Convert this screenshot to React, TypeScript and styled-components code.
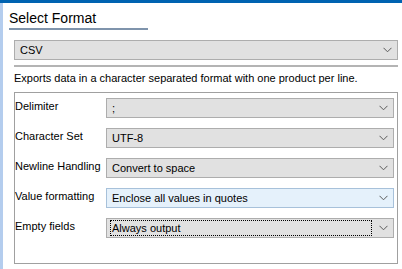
import React from 'react';
import styled, { createGlobalStyle } from 'styled-components';

// GLOBAL

const GlobalStyle = createGlobalStyle`
  html, body {
    margin: 0;
    padding: 0;
    background: #ffffff;
  }
  body {
    font-family: "Liberation Sans", Arial, sans-serif;
    font-size: 11px;
    color: #000000;
  }
`;

// STYLED COMPONENTS

const Window = styled.div`
  width: 402px;
  height: 269px;
  display: flex;
  flex-direction: column;
  overflow: hidden;
`;

const TopBar = styled.div`
  height: 3px;
  background: #0063b1;
  flex-shrink: 0;
`;

const Body = styled.div`
  flex: 1;
  display: flex;
`;

const SideStrip = styled.div`
  width: 3px;
  background: #b4cdee;
  flex-shrink: 0;
`;

const Main = styled.div`
  flex: 1;
  padding: 6px 4px 0 6px;
  display: flex;
  flex-direction: column;
`;

const Title = styled.div`
  width: 139px;
  font-size: 14px;
  line-height: 18px;
  padding-bottom: 1px;
  border-bottom: 2px solid #7f94ac;
  color: #000000;
`;

const Section = styled.div`
  margin: 10px 0 0 5px;
  display: flex;
  flex-direction: column;
`;

const ComboBox = styled.div<{ $hover?: boolean }>`
  box-sizing: border-box;
  height: 20px;
  display: flex;
  align-items: center;
  padding: 0 5px 0 3px;
  background: ${(p) => (p.$hover ? '#e5f1fb' : '#e1e1e1')};
  border: 1px solid ${(p) => (p.$hover ? '#a7c1da' : '#adadad')};
`;

const ComboText = styled.div<{ $focused?: boolean }>`
  flex: 1;
  box-sizing: border-box;
  height: 16px;
  line-height: 14px;
  padding-left: 1px;
  border: 1px dotted ${(p) => (p.$focused ? '#000000' : 'transparent')};
  margin-right: 7px;
  white-space: nowrap;
`;

const Chevron = styled.svg`
  width: 9px;
  height: 6px;
  flex-shrink: 0;
`;

const Separator = styled.div`
  margin-top: 5px;
  height: 2px;
  background: #b4b4b4;
`;

const Description = styled.div`
  margin-top: 3px;
  line-height: 16px;
  white-space: nowrap;
`;

const GroupBox = styled.div`
  margin-top: 6px;
  height: 172px;
  box-sizing: border-box;
  border: 1px solid #a0a0a0;
  padding: 5px 3px 0 0;
  display: grid;
  grid-template-columns: 91px 1fr;
  grid-auto-rows: 20px;
  row-gap: 10px;
  align-content: start;
`;

const FieldLabel = styled.div`
  line-height: 14px;
  padding-top: 1px;
  white-space: nowrap;
`;

// COMPONENTS

const Combo = ({ value, hover, focused }: { value: string; hover?: boolean; focused?: boolean }) => (
  <ComboBox $hover={hover}>
    <ComboText $focused={focused}>{value}</ComboText>
    <Chevron viewBox="0 0 9 6">
      <polyline points="0.5,0.8 4.5,4.8 8.5,0.8" fill="none" stroke="#5a5a5a" strokeWidth="1" />
    </Chevron>
  </ComboBox>
);

const fields = [
  { label: 'Delimiter', value: ';' },
  { label: 'Character Set', value: 'UTF-8' },
  { label: 'Newline Handling', value: 'Convert to space' },
  { label: 'Value formatting', value: 'Enclose all values in quotes', hover: true },
  { label: 'Empty fields', value: 'Always output', focused: true },
];

export default function App() {
  return (
    <>
      <GlobalStyle />
      <Window>
        <TopBar />
        <Body>
          <SideStrip />
          <Main>
            <Title>Select Format</Title>
            <Section>
              <Combo value="CSV" />
              <Separator />
              <Description>
                Exports data in a character separated format with one product per line.
              </Description>
              <GroupBox>
                {fields.map((field) => (
                  <React.Fragment key={field.label}>
                    <FieldLabel>{field.label}</FieldLabel>
                    <Combo value={field.value} hover={field.hover} focused={field.focused} />
                  </React.Fragment>
                ))}
              </GroupBox>
            </Section>
          </Main>
        </Body>
      </Window>
    </>
  );
}
